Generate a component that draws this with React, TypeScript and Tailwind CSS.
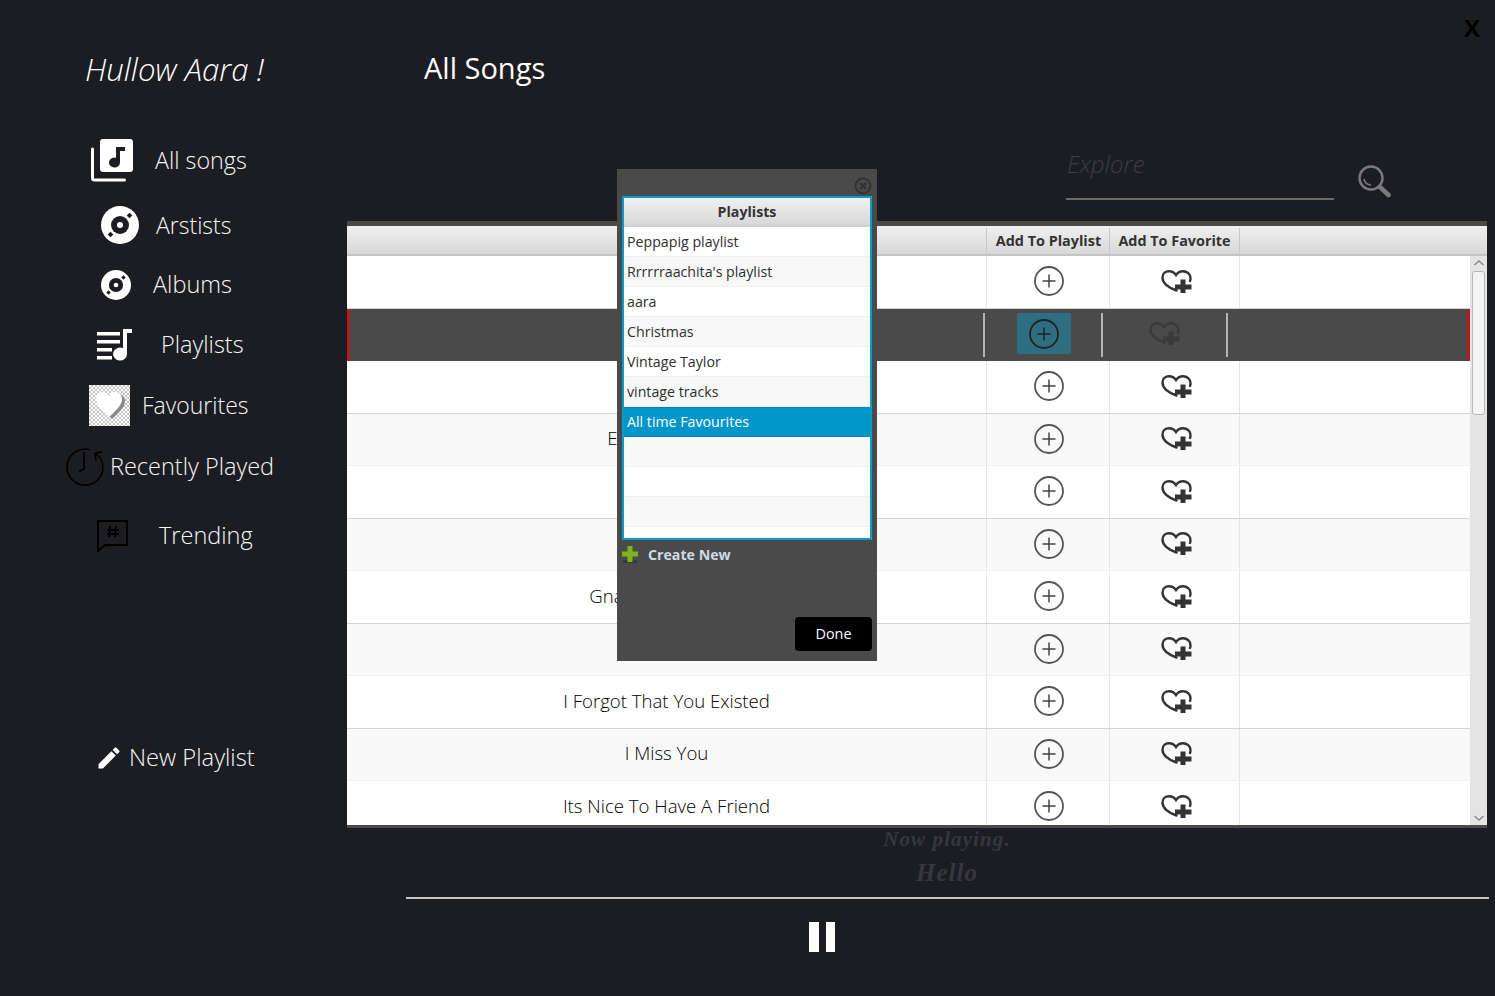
import React from "react";

const font = { fontFamily: '"Open Sans", "Noto Sans", sans-serif' };

function AllSongsIcon() {
  return (
    <svg width="43" height="43" viewBox="0 0 43 43">
      <path d="M1.500 10v29a2 2 0 0 0 2 2h30" fill="none" stroke="#fff" strokeWidth="3" strokeLinecap="round" />
      <rect x="9" y="0" width="33" height="33" rx="3" fill="#fff" />
      <path d="M25 8h9v4h-5v11.500a5.500 5 0 1 1-4-4.800z" fill="#1c1d22" />
    </svg>
  );
}

function DiscIcon({ size }: { size: number }) {
  return (
    <svg width={size} height={size} viewBox="0 0 38 38">
      <circle cx="19" cy="19" r="19" fill="#fff" />
      <circle cx="19" cy="19" r="9" fill="#1c1d22" />
      <circle cx="19" cy="19" r="3" fill="#fff" />
      <rect x="26.500" y="7.500" width="4" height="4" transform="rotate(45 28.500 9.500)" fill="#1c1d22" />
      <rect x="7.500" y="26.500" width="4" height="4" transform="rotate(45 9.500 28.500)" fill="#1c1d22" />
    </svg>
  );
}

function PlaylistsIcon() {
  return (
    <svg width="36" height="33" viewBox="0 0 36 33">
      <g fill="#fff">
        <rect x="0" y="3" width="23" height="3.500" />
        <rect x="0" y="11" width="23" height="3.500" />
        <rect x="0" y="19" width="15" height="3.500" />
        <rect x="0" y="27" width="15" height="3.500" />
        <path d="M26 0h9v4h-5v21a7 6.500 0 1 1-4-5.800z" />
      </g>
    </svg>
  );
}

function FavIcon() {
  return (
    <div className="flex h-[41px] w-[41px] items-center justify-center bg-[repeating-conic-gradient(#c4c4c4_0_25%,#ffffff_0_50%)] bg-[length:4px_4px]">
      <svg width="32" height="30" viewBox="0 0 32 30">
        <path d="M16 28C7 20 3 15 3 10 3 6 6 3 10 3c3 0 5 1.500 6 4 1-2.500 3-4 6-4 4 0 7 3 7 7 0 5-4 10-13 18z" fill="#8a8a8a" transform="translate(2 1)" />
        <path d="M15 27C6 19 2 14 2 9c0-4 3-7 7-7 3 0 5 1.500 6 4 1-2.500 3-4 6-4 4 0 7 3 7 7 0 5-4 10-13 18z" fill="#fff" />
      </svg>
    </div>
  );
}

function RecentIcon() {
  return (
    <svg width="38" height="38" viewBox="0 0 38 38" fill="none" stroke="#000" strokeWidth="1.600">
      <path d="M24 1.800A18 18 0 1 0 37 19c0-5-3-10-8-14" />
      <path d="M29 5l7-1M29 5l1 8" />
      <path d="M18 4v17l-5 2.500" />
    </svg>
  );
}

function TrendingIcon() {
  return (
    <svg width="31" height="32" viewBox="0 0 31 32" fill="none">
      <path d="M1 1h29v24H8l-7 6z" stroke="#000" strokeWidth="2" strokeLinejoin="round" />
      <path d="M13 6l-1 11M19 6l-1 11M10 10h12M10 14h12" stroke="#000" strokeWidth="2" />
    </svg>
  );
}

function PlusCircle({ dark }: { dark?: boolean }) {
  const c = dark ? "#1f2326" : "#555555";
  return (
    <svg width="30" height="30" viewBox="0 0 30 30" fill="none">
      <circle cx="15" cy="15" r="14" stroke={c} strokeWidth="1.800" />
      <path d="M15 8.500v13M8.500 15h13" stroke={dark ? "#1f2326" : "#444444"} strokeWidth="1.500" />
    </svg>
  );
}

function HeartPlus({ dim }: { dim?: boolean }) {
  const c = dim ? "#3a3a3a" : "#333333";
  return (
    <svg width="31" height="23" viewBox="0 0 31 23" fill="none">
      <path d="M15.500 20.500C10 18.500 1.500 14 1.500 7.500 1.500 3.500 4.500 1.200 8 1.200c3 0 5.500 1.600 7 3.800C16.500 2.800 19 1.200 22 1.200c4 0 7.500 2.800 7.500 7 0 1-.2 2-.5 2.800" stroke={c} strokeWidth="2.400" strokeLinecap="round" />
      <path d="M19.500 9.500h5v5H30.500v5h-6v3.500h-5v-3.500h-5.500v-5h5.500z" fill={c} />
    </svg>
  );
}

const navItems = [
  { label: "All songs", icon: <AllSongsIcon />, cls: "mt-[39px] h-[60px] pl-[91px]", text: "ml-[21px] text-[23.300px]" },
  { label: "Arstists", icon: <DiscIcon size={38} />, cls: "mt-[5px] h-[60px] pl-[101px]", text: "ml-[17px] text-[23px]" },
  { label: "Albums", icon: <DiscIcon size={30} />, cls: "h-[60px] pl-[101px]", text: "ml-[22px] text-[23.500px]" },
  { label: "Playlists", icon: <PlaylistsIcon />, cls: "h-[60px] pl-[97px]", text: "ml-[28px] text-[23.500px]" },
  { label: "Favourites", icon: <FavIcon />, cls: "h-[60px] pl-[89px]", text: "ml-[12px] text-[23px]" },
  { label: "Recently Played", icon: <RecentIcon />, cls: "mt-[2px] h-[60px] pl-[66px]", text: "ml-[6px] text-[23.500px]" },
  { label: "Trending", icon: <TrendingIcon />, cls: "mt-[9px] h-[60px] pl-[97px]", text: "ml-[31px] text-[23.500px]" },
];

const songs = [
  { title: "" },
  { title: "" },
  { title: "" },
  { title: "E", cls: "mr-[108px]" },
  { title: "" },
  { title: "" },
  { title: "Gna", cls: "mr-[120px]" },
  { title: "" },
  { title: "I Forgot That You Existed" },
  { title: "I Miss You" },
  { title: "Its Nice To Have A Friend" },
];

const playlists = ["Peppapig playlist", "Rrrrrraachita's playlist", "aara", "Christmas", "Vintage Taylor", "vintage tracks", "All time Favourites", "", "", ""];

function Sidebar() {
  return (
    <aside className="flex h-[996px] w-[347px] shrink-0 flex-col">
      <div className="mt-[48px] h-[43px] pl-[85px] text-[31.200px] leading-[42px] font-light whitespace-nowrap text-white italic">Hullow Aara !</div>
      {navItems.map((n) => (
        <div key={n.label} className={`flex items-center ${n.cls}`}>
          <div className="shrink-0">{n.icon}</div>
          <span className={`font-light whitespace-nowrap text-[#f6f6f6] ${n.text}`}>{n.label}</span>
        </div>
      ))}
      <div className="mt-[174px] flex items-center pl-[95px]">
        <svg width="28" height="28" viewBox="0 0 24 24" fill="#fff">
          <path d="M3 17.250V21h3.750L17.810 9.940l-3.750-3.750L3 17.250zM20.710 7.040c.39-.39.39-1.020 0-1.410l-2.340-2.340c-.39-.39-1.020-.39-1.410 0l-1.830 1.830 3.750 3.750 1.830-1.830z" />
        </svg>
        <span className="ml-[6px] text-[23.700px] font-light whitespace-nowrap text-[#f6f6f6]">New Playlist</span>
      </div>
    </aside>
  );
}

function SongRow({ title, cls, index }: { title: string; cls?: string; index: number }) {
  const selected = index === 1;
  if (selected) {
    return (
      <div className="flex h-[52.500px] border-x-[3px] border-x-[#b01c20] bg-[#4a4a4a]">
        <div className="w-[633px] shrink-0" />
        <div className="my-[4px] w-[2px] shrink-0 bg-[#b4b4b4]" />
        <div className="flex w-[116px] shrink-0 items-center justify-center">
          <div className="mb-[2px] ml-[1px] flex h-[41px] w-[54px] items-center justify-center rounded-[2px] bg-[#2f6e80]">
            <PlusCircle dark />
          </div>
        </div>
        <div className="my-[4px] w-[2px] shrink-0 bg-[#b4b4b4]" />
        <div className="flex w-[123px] shrink-0 items-center justify-center pb-[3px]"><HeartPlus dim /></div>
        <div className="my-[4px] w-[2px] shrink-0 bg-[#b4b4b4]" />
      </div>
    );
  }
  const bg = index % 2 === 0 ? "bg-white border-b-[#d4d4d4]" : "bg-[#f9f9f9] border-b-[#f0f0f0]";
  return (
    <div className={`flex h-[52.500px] border-b ${bg}`}>
      <div className="flex w-[639px] shrink-0 items-center justify-center pb-[2px] text-[18.600px] font-light whitespace-nowrap text-black">
        <span className={cls}>{title}</span>
      </div>
      <div className="flex w-[123px] shrink-0 items-center justify-center border-l border-l-[#e6e6e6] pb-[1px] pl-[2px]"><PlusCircle /></div>
      <div className="flex w-[131px] shrink-0 items-center justify-center border-x border-x-[#e6e6e6] pb-[1px] pl-[3px]"><HeartPlus /></div>
    </div>
  );
}

function SongTable() {
  return (
    <section className="flex h-[607px] w-[1140px] flex-col border-t-[5px] border-b-[3px] border-t-[#4a4a4a] border-b-[#4a4a4a] bg-white">
      <div className="flex h-[30px] shrink-0 border-b-2 border-b-[#c4c4c4] bg-gradient-to-b from-[#f0f0f0] to-[#d8d8d8] pt-[2px] text-[14.400px] font-bold whitespace-nowrap text-[#333]">
        <div className="w-[639px] shrink-0" />
        <div className="flex w-[123px] shrink-0 items-center justify-center border-l border-l-[#c8c8c8] pl-[1px]">Add To Playlist</div>
        <div className="flex w-[131px] shrink-0 items-center justify-center border-x border-x-[#c8c8c8]">Add To Favorite</div>
      </div>
      <div className="flex h-[569px]">
        <div className="h-full w-[1123px] shrink-0 overflow-hidden">
          {songs.map((s, i) => <SongRow key={i} title={s.title} cls={s.cls} index={i} />)}
        </div>
        <div className="flex h-full w-[17px] shrink-0 flex-col items-center bg-[#e4e4e4]">
          <svg className="mt-[3px]" width="12" height="8" viewBox="0 0 12 8" fill="none"><path d="M1.500 6 6 2l4.500 4" stroke="#888" strokeWidth="1.400" /></svg>
          <div className="mt-[4px] h-[144px] w-[13px] rounded-[3px] border border-[#b8b8b8] bg-[#f4f4f4]" />
          <div className="flex-1" />
          <svg className="mb-[3px]" width="12" height="8" viewBox="0 0 12 8" fill="none"><path d="M1.500 2 6 6l4.500-4" stroke="#888" strokeWidth="1.400" /></svg>
        </div>
      </div>
    </section>
  );
}

function Main() {
  return (
    <main className="flex h-[996px] flex-1 flex-col">
      <div className="flex h-[48px] justify-end pt-[10px] pr-[15px] text-[24px] leading-[36px] font-bold text-black">X</div>
      <h1 className="h-[40px] pl-[77px] text-[29px] leading-[39px] font-normal text-white">All Songs</h1>
      <div className="flex h-[133px] justify-end pt-[59px] pr-[104px]">
        <div className="h-[53px] w-[268px] border-b-2 border-b-[#6a6a6a] pl-[1px] text-[24px] leading-[34px] font-light text-[#3d3e42] italic">Explore</div>
        <svg className="mt-[18px] ml-[24px]" width="33" height="33" viewBox="0 0 33 33" fill="none">
          <circle cx="13" cy="13" r="11.500" stroke="#7a7a7a" strokeWidth="2.400" />
          <path d="M6 14a7.500 7.500 0 0 0 7 6" stroke="#7a7a7a" strokeWidth="1.500" />
          <path d="M22 22l8.500 8" stroke="#7a7a7a" strokeWidth="4.500" strokeLinecap="round" />
        </svg>
      </div>
      <SongTable />
      <div className="flex flex-col items-center pl-[52px] font-bold text-[#36373c] italic [font-family:'Liberation_Serif',serif]">
        <div className="h-[24px] text-[21px] leading-[22px] tracking-[1.100px] whitespace-nowrap">Now playing.</div>
        <div className="mt-[7px] h-[38px] text-[25px] leading-[28px] tracking-[1px]">Hello</div>
      </div>
      <div className="ml-[59px] h-[2px] w-[1083px] bg-[#c4c4c4]" />
      <div className="mt-[23px] ml-[462px] flex gap-[7px]">
        <div className="h-[30px] w-[10px] bg-white" />
        <div className="h-[30px] w-[9px] bg-white" />
      </div>
    </main>
  );
}

function PlaylistModal() {
  return (
    <div className="absolute top-[169px] left-[617px] flex h-[492px] w-[260px] flex-col bg-[#4a4a4a] px-[5px]">
      <div className="flex h-[27px] shrink-0 items-start justify-end pt-[8px]">
        <svg width="18" height="18" viewBox="0 0 18 18" fill="none">
          <circle cx="9" cy="9" r="7.500" stroke="#333" strokeWidth="2" />
          <path d="M6 6l6 6M12 6l-6 6" stroke="#333" strokeWidth="2.400" />
        </svg>
      </div>
      <div className="h-[344px] shrink-0 overflow-hidden border-2 border-[#0a9acb] bg-white text-[14.200px] text-[#2e2e2e]">
        <div className="flex h-[29px] items-center justify-center border-b-2 border-b-[#d0d0d0] bg-gradient-to-b from-[#f0f0f0] to-[#d8d8d8] pt-[1px] font-bold text-[#333]">Playlists</div>
        {playlists.map((p, i) => (
          <div
            key={i}
            className={`flex h-[30px] items-center border-b pl-[3px] whitespace-nowrap ${
              i === 6 ? "border-y border-y-[#0a85b0] bg-[#0096c9] text-white" : i % 2 === 1 ? "border-b-[#f0f0f0] bg-[#f8f8f8]" : "border-b-[#f0f0f0] bg-white"
            }`}
          >
            {p}
          </div>
        ))}
      </div>
      <div className="mt-[6px] flex h-[17px] items-center">
        <svg width="16" height="17" viewBox="0 0 16 17">
          <rect x="1" y="14" width="14" height="3" fill="#3a3a3a" />
          <path d="M5.500 0h5v5.500H16v5h-5.500V16h-5v-5.500H0v-5h5.500z" fill="#7ab51d" />
        </svg>
        <span className="ml-[10px] text-[14.200px] font-bold text-[#d0dae4]">Create New</span>
      </div>
      <div className="mt-[54px] flex justify-end">
        <div className="flex h-[34px] w-[77px] items-center justify-center rounded-[4px] bg-black text-[14.400px] text-white">Done</div>
      </div>
    </div>
  );
}

export default function App() {
  return (
    <div className="relative flex h-[996px] w-[1495px] overflow-hidden bg-[#1c1d22]" style={font}>
      <Sidebar />
      <Main />
      <PlaylistModal />
    </div>
  );
}
